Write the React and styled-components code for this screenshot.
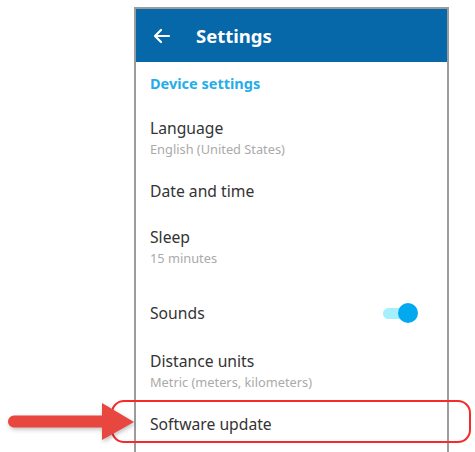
import React from 'react'
import styled, { createGlobalStyle } from 'styled-components'

const GlobalStyle = createGlobalStyle`
  html, body {
    margin: 0;
    padding: 0;
    background: #fff;
  }
  body {
    font-family: "Noto Sans", "Open Sans", sans-serif;
    width: 475px;
    height: 452px;
    overflow: hidden;
  }
`

const Page = styled.div`
  position: relative;
  width: 475px;
  height: 452px;
  padding-top: 7px;
  padding-left: 134px;
  box-sizing: border-box;
`

const Phone = styled.div`
  width: 315px;
  height: 445px;
  box-sizing: border-box;
  border: 2px solid #9c9c9c;
  border-bottom: none;
  display: flex;
  flex-direction: column;
`

const Header = styled.div`
  height: 53px;
  background: #0668a9;
  display: flex;
  align-items: center;
  padding-left: 16px;
  color: #fff;
`

const BackButton = styled.svg`
  width: 20px;
  height: 20px;
  margin-right: 24px;
`

const Title = styled.div`
  font-size: 18.5px;
  font-weight: 700;
`

const List = styled.div`
  display: flex;
  flex-direction: column;
  padding: 0 29px 0 14px;
`

const SectionLabel = styled.div`
  margin-top: 11px;
  font-size: 14.5px;
  line-height: 20px;
  font-weight: 700;
  color: #25ade9;
`

const Item = styled.div`
  margin-top: ${p => p.$mt}px;
  display: flex;
  align-items: center;
  justify-content: space-between;
`

const ItemText = styled.div`
  display: flex;
  flex-direction: column;
`

const ItemTitle = styled.div`
  font-size: 15.7px;
  line-height: 20px;
  color: #333;
`

const ItemSub = styled.div`
  margin-top: 4px;
  font-size: 12.8px;
  line-height: 14px;
  color: #aaa;
`

const Toggle = styled.div`
  position: relative;
  width: 35px;
  height: 20px;
  display: flex;
  align-items: center;
`

const Track = styled.div`
  width: 34px;
  height: 11px;
  border-radius: 6px;
  background: #a6f0fd;
`

const Thumb = styled.div`
  position: absolute;
  right: 0;
  top: 0;
  width: 20px;
  height: 20px;
  border-radius: 50%;
  background: #03a9ee;
`

const Highlight = styled.div`
  position: absolute;
  left: 111px;
  top: 400px;
  width: 360px;
  height: 43px;
  box-sizing: border-box;
  border: 2px solid #f52a2a;
  border-radius: 13px;
`

const Arrow = styled.svg`
  position: absolute;
  left: 0;
  top: 396px;
  width: 140px;
  height: 50px;
  filter: drop-shadow(1px 2px 2px rgba(0, 0, 0, 0.25));
`

const items = [
  { mt: 25, title: 'Language', sub: 'English (United States)' },
  { mt: 25, title: 'Date and time' },
  { mt: 26, title: 'Sleep', sub: '15 minutes' },
  { mt: 38, title: 'Sounds', toggle: true },
  { mt: 28, title: 'Distance units', sub: 'Metric (meters, kilometers)' },
  { mt: 25, title: 'Software update' }
]

const App = () => (
  <Page>
    <GlobalStyle />
    <Phone>
      <Header>
        <BackButton viewBox="0 0 20 20" fill="none" stroke="#fff" strokeWidth="2.2" strokeLinecap="round" strokeLinejoin="round">
          <path d="M17 10H3M9 4l-6 6 6 6" />
        </BackButton>
        <Title>Settings</Title>
      </Header>
      <List>
        <SectionLabel>Device settings</SectionLabel>
        {items.map(it => (
          <Item key={it.title} $mt={it.mt}>
            <ItemText>
              <ItemTitle>{it.title}</ItemTitle>
              {it.sub && <ItemSub>{it.sub}</ItemSub>}
            </ItemText>
            {it.toggle && (
              <Toggle>
                <Track />
                <Thumb />
              </Toggle>
            )}
          </Item>
        ))}
      </List>
    </Phone>
    <Highlight />
    <Arrow viewBox="0 0 140 50">
      <path d="M14 19.5 H102 V7 L134 26 L102 44 V31.5 H14 a6 6 0 0 1 0 -12 Z" fill="#e8473f" />
    </Arrow>
  </Page>
)

export default App
